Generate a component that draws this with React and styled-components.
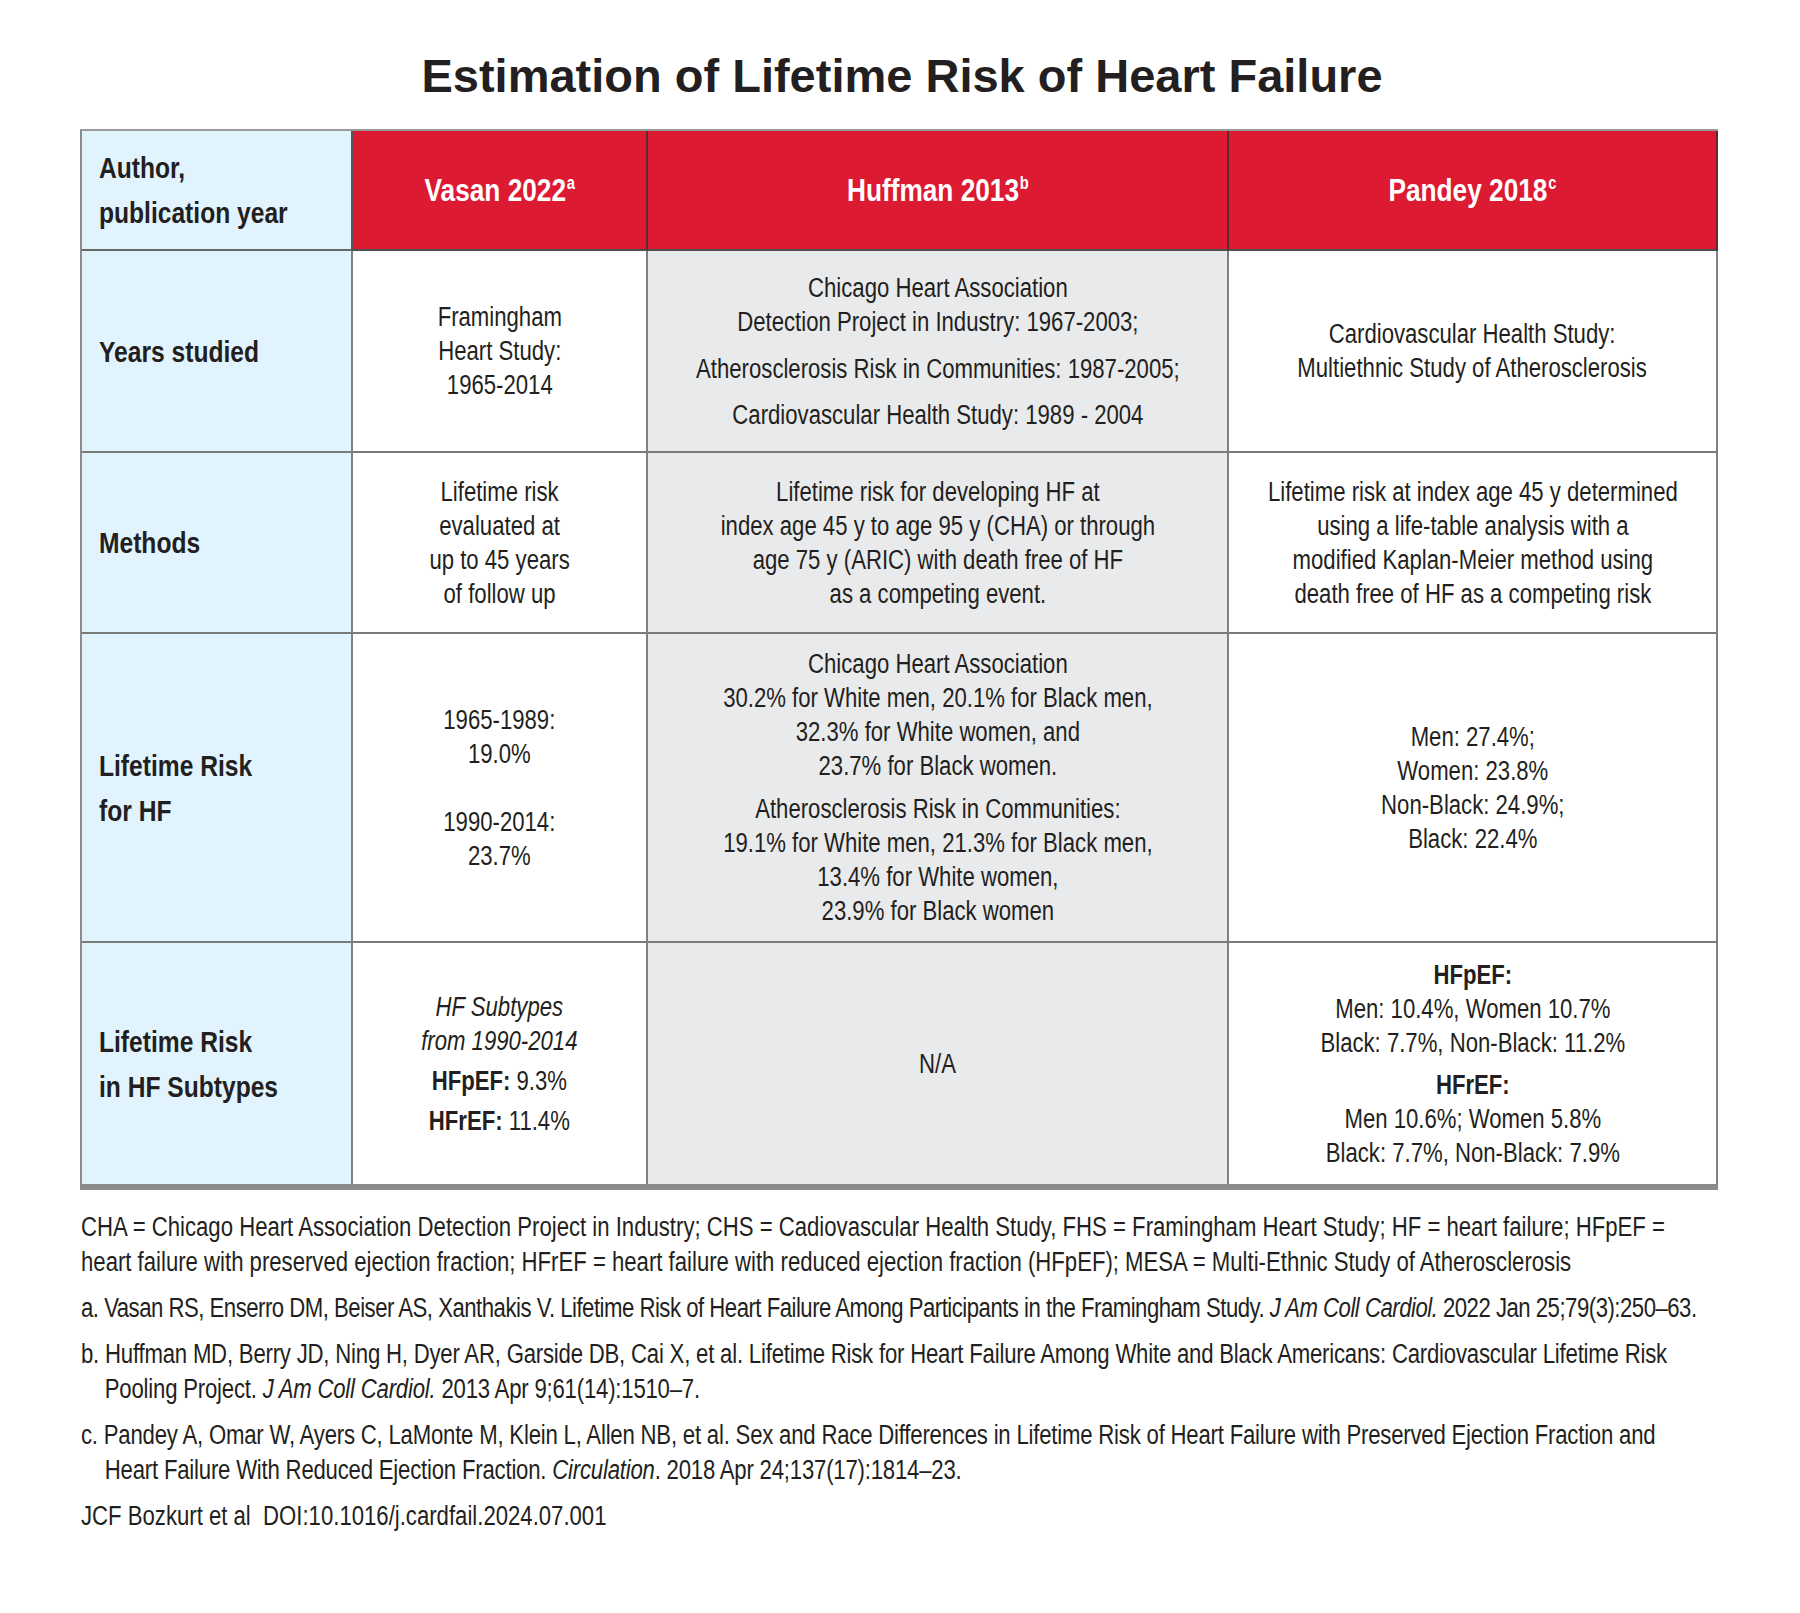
import React from "react";
import styled, { createGlobalStyle } from "styled-components";

// Myriad Condensed is not installed, so the Arial-width face is narrowed
// horizontally, which is how a condensed cut of it would look.
const SANS = `"Liberation Sans", Arial, sans-serif`;
const NARROW = 0.82;

const GlobalStyle = createGlobalStyle`
  html, body {
    margin: 0;
    padding: 0;
    background: #ffffff;
  }
  body {
    font-family: ${SANS};
    color: #231f20;
  }
`;

const Page = styled.div`
  width: 1800px;
  padding: 52px 0 40px;
  box-sizing: border-box;
  overflow: hidden;
`;

const Title = styled.h1`
  margin: 0 0 30px;
  font-weight: 700;
  font-size: 47px;
  line-height: 47px;
  text-align: center;
  padding-left: 4px;
  color: #231f20;
`;

const Grid = styled.div`
  margin-left: 80px;
  width: fit-content;
  display: grid;
  grid-template-columns: 271px 295px 581px 489px;
  grid-template-rows: 120px 202px 181px 309px 241px;
  border-left: 2px solid #8c8c8c;
  border-top: 2px solid #9a9a9a;
  border-bottom: 6px solid #8a8b8d;
`;

const Cell = styled.div`
  box-sizing: border-box;
  display: flex;
  flex-direction: column;
  justify-content: center;
  border-right: 2px solid #808080;
  border-bottom: ${(p) => (p.$last ? "none" : "2px solid #7a7a7a")};
`;

const LabelCell = styled(Cell)`
  background: #e1f3fd;
  padding-left: 17px;
  align-items: flex-start;
  font-weight: 700;
  font-size: 30px;
  line-height: 45px;
  color: #231f20;
`;

const CornerCell = styled(LabelCell)`
  border-right-color: #555555;
  border-bottom-color: #666666;
`;

const HeadCell = styled(Cell)`
  background: #dc1a32;
  border-right: 2px solid #5e2a30;
  border-bottom: 2px solid #4f4f4f;
  align-items: center;
  color: #ffffff;
  font-weight: 700;
  font-size: 32px;
  line-height: 45px;
`;

const DataCell = styled(Cell)`
  background: ${(p) => (p.$gray ? "#e9eaec" : "#ffffff")};
  align-items: center;
  text-align: center;
  font-size: 27px;
  line-height: 34px;
  color: #231f20;
`;

const Squeeze = styled.div`
  white-space: nowrap;
  transform: scaleX(${NARROW});
  transform-origin: ${(p) => (p.$left ? "left center" : "center center")};
`;

const Para = styled.div`
  margin-top: ${(p) => p.$gap || 0}px;
`;

const Blank = styled.div`
  height: 34px;
`;

const Sup = styled.sup`
  font-size: 18px;
  line-height: 0;
  vertical-align: 12px;
  margin-left: 1px;
`;

const Notes = styled.div`
  margin: 20px 0 0 81px;
  font-size: 27px;
  line-height: 35px;
  color: #231f20;
  white-space: nowrap;
  transform: scaleX(${NARROW});
  transform-origin: left top;
`;

const Note = styled.p`
  margin: ${(p) => (p.$first ? 0 : 11)}px 0 0;
  padding-left: ${(p) => (p.$hang ? "29px" : "0")};
  text-indent: ${(p) => (p.$hang ? "-29px" : "0")};
  letter-spacing: ${(p) => p.$track || 0}px;
`;

export default function App() {
  return (
    <Page>
      <GlobalStyle />
      <Title>Estimation of Lifetime Risk of Heart Failure</Title>

      <Grid>
        <CornerCell>
          <Squeeze $left>
            Author,
            <br />
            publication year
          </Squeeze>
        </CornerCell>
        <HeadCell>
          <Squeeze>
            Vasan 2022<Sup>a</Sup>
          </Squeeze>
        </HeadCell>
        <HeadCell>
          <Squeeze>
            Huffman 2013<Sup>b</Sup>
          </Squeeze>
        </HeadCell>
        <HeadCell>
          <Squeeze>
            Pandey 2018<Sup>c</Sup>
          </Squeeze>
        </HeadCell>

        <LabelCell>
          <Squeeze $left>Years studied</Squeeze>
        </LabelCell>
        <DataCell>
          <Squeeze>
            Framingham
            <br />
            Heart Study:
            <br />
            1965-2014
          </Squeeze>
        </DataCell>
        <DataCell $gray>
          <Squeeze>
            <Para>
              Chicago Heart Association
              <br />
              Detection Project in Industry: 1967-2003;
            </Para>
            <Para $gap={13}>Atherosclerosis Risk in Communities: 1987-2005;</Para>
            <Para $gap={12}>Cardiovascular Health Study: 1989 - 2004</Para>
          </Squeeze>
        </DataCell>
        <DataCell>
          <Squeeze>
            Cardiovascular Health Study:
            <br />
            Multiethnic Study of Atherosclerosis
          </Squeeze>
        </DataCell>

        <LabelCell>
          <Squeeze $left>Methods</Squeeze>
        </LabelCell>
        <DataCell>
          <Squeeze>
            Lifetime risk
            <br />
            evaluated at
            <br />
            up to 45 years
            <br />
            of follow up
          </Squeeze>
        </DataCell>
        <DataCell $gray>
          <Squeeze>
            Lifetime risk for developing HF at
            <br />
            index age 45 y to age 95 y (CHA) or through
            <br />
            age 75 y (ARIC) with death free of HF
            <br />
            as a competing event.
          </Squeeze>
        </DataCell>
        <DataCell>
          <Squeeze>
            Lifetime risk at index age 45 y determined
            <br />
            using a life-table analysis with a
            <br />
            modified Kaplan-Meier method using
            <br />
            death free of HF as a competing risk
          </Squeeze>
        </DataCell>

        <LabelCell>
          <Squeeze $left>
            Lifetime Risk
            <br />
            for HF
          </Squeeze>
        </LabelCell>
        <DataCell>
          <Squeeze>
            1965-1989:
            <br />
            19.0%
            <Blank />
            1990-2014:
            <br />
            23.7%
          </Squeeze>
        </DataCell>
        <DataCell $gray>
          <Squeeze>
            <Para>
              Chicago Heart Association
              <br />
              30.2% for White men, 20.1% for Black men,
              <br />
              32.3% for White women, and
              <br />
              23.7% for Black women.
            </Para>
            <Para $gap={9}>
              Atherosclerosis Risk in Communities:
              <br />
              19.1% for White men, 21.3% for Black men,
              <br />
              13.4% for White women,
              <br />
              23.9% for Black women
            </Para>
          </Squeeze>
        </DataCell>
        <DataCell>
          <Squeeze>
            Men: 27.4%;
            <br />
            Women: 23.8%
            <br />
            Non-Black: 24.9%;
            <br />
            Black: 22.4%
          </Squeeze>
        </DataCell>

        <LabelCell $last>
          <Squeeze $left>
            Lifetime Risk
            <br />
            in HF Subtypes
          </Squeeze>
        </LabelCell>
        <DataCell $last>
          <Squeeze>
            <Para>
              <i>
                HF Subtypes
                <br />
                from 1990-2014
              </i>
            </Para>
            <Para $gap={6}>
              <b>HFpEF:</b> 9.3%
            </Para>
            <Para $gap={6}>
              <b>HFrEF:</b> 11.4%
            </Para>
          </Squeeze>
        </DataCell>
        <DataCell $gray $last>
          <Squeeze>N/A</Squeeze>
        </DataCell>
        <DataCell $last>
          <Squeeze>
            <Para>
              <b>HFpEF:</b>
              <br />
              Men: 10.4%, Women 10.7%
              <br />
              Black: 7.7%, Non-Black: 11.2%
            </Para>
            <Para $gap={8}>
              <b>HFrEF:</b>
              <br />
              Men 10.6%; Women 5.8%
              <br />
              Black: 7.7%, Non-Black: 7.9%
            </Para>
          </Squeeze>
        </DataCell>
      </Grid>

      <Notes>
        <Note $first>
          CHA = Chicago Heart Association Detection Project in Industry; CHS = Cadiovascular Health Study, FHS = Framingham Heart Study; HF = heart failure; HFpEF =
          <br />
          heart failure with preserved ejection fraction; HFrEF = heart failure with reduced ejection fraction (HFpEF); MESA = Multi-Ethnic Study of Atherosclerosis
        </Note>
        <Note $track={-0.6}>
          a. Vasan RS, Enserro DM, Beiser AS, Xanthakis V. Lifetime Risk of Heart Failure Among Participants in the Framingham Study. <i>J Am Coll Cardiol.</i> 2022 Jan 25;79(3):250–63.
        </Note>
        <Note $hang $track={-0.24}>
          b. Huffman MD, Berry JD, Ning H, Dyer AR, Garside DB, Cai X, et al. Lifetime Risk for Heart Failure Among White and Black Americans: Cardiovascular Lifetime Risk
          <br />
          Pooling Project. <i>J Am Coll Cardiol.</i> 2013 Apr 9;61(14):1510–7.
        </Note>
        <Note $hang $track={-0.24}>
          c. Pandey A, Omar W, Ayers C, LaMonte M, Klein L, Allen NB, et al. Sex and Race Differences in Lifetime Risk of Heart Failure with Preserved Ejection Fraction and
          <br />
          Heart Failure With Reduced Ejection Fraction. <i>Circulation</i>. 2018 Apr 24;137(17):1814–23.
        </Note>
        <Note>JCF Bozkurt et al&nbsp; DOI:10.1016/j.cardfail.2024.07.001</Note>
      </Notes>
    </Page>
  );
}
